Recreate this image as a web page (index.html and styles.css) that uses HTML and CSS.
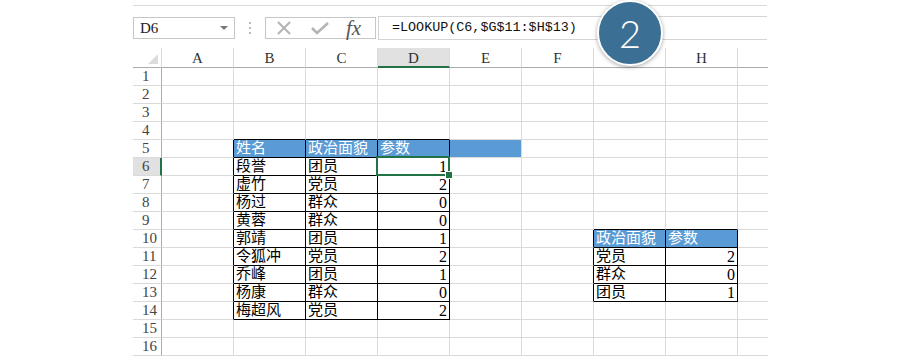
FILE: index.html
```html
<!DOCTYPE html>
<html lang="zh-CN">
<head>
  <meta charset="UTF-8">
  <title>LOOKUP</title>
  <link rel="stylesheet" href="styles.css">
</head>
<body>

<div class="sheet">
  <div class="ribbon"></div>
  <!--编辑栏-->
  <div class="fbar">
    <div class="namebox"><span>D6</span><span class="arrow"></span></div>
    <div class="grip"><i></i><i></i><i></i></div>
    <div class="fxbox">
      <svg width="16" height="16" viewBox="0 0 16 16"><path d="M2 2L14 14M14 2L2 14" stroke="#b4b4b4" stroke-width="2" fill="none"/></svg>
      <svg width="20" height="16" viewBox="0 0 20 16"><path d="M2 8L7 13L18 3" stroke="#b4b4b4" stroke-width="2.6" fill="none"/></svg>
      <span class="fx">fx</span>
    </div>
    <div class="formula">=LOOKUP(C6,$G$11:$H$13)</div>
  </div>
  <!--表格-->
  <div class="grid" id="grid"></div>
  <div class="badge">2</div>
</div>

<script>
(function () {
  var grid=document.getElementById("grid");
  //G列标题被标记遮住
  var letters=["A","B","C","D","E","F","","H",""];
  var t1=[["段誉","团员",1],["虚竹","党员",2],["杨过","群众",0],["黄蓉","群众",0],["郭靖","团员",1],
          ["令狐冲","党员",2],["乔峰","团员",1],["杨康","群众",0],["梅超风","党员",2]];
  var t2=[["党员",2],["群众",0],["团员",1]];

  function cell(cls,text) {
    var d=document.createElement("div");
    d.className="c "+cls;
    d.textContent=text;
    grid.appendChild(d);
    return d;
  }
  //表头
  cell("corner","");
  for(var i=0;i<letters.length;i++){
    cell("ch"+(i==3?" on":"")+(i==8?" end":""),letters[i]);
  }
  //行
  for(var r=1;r<=16;r++){
    cell("rh"+(r==6?" on":""),r);
    for(var c=1;c<=9;c++){
      var cls=[],text="";
      if(r>=5&&r<=14&&c>=2&&c<=4) cls.push("bk");
      if(c==1&&r>=5&&r<=14) cls.push("bkr");
      if(r==4&&c>=2&&c<=4) cls.push("bkb");
      if(r>=10&&r<=13&&c>=7&&c<=8) cls.push("bk");
      if(c==6&&r>=10&&r<=13) cls.push("bkr");
      if(r==9&&c>=7&&c<=8) cls.push("bkb");
      if((r==5&&c>=2&&c<=5)||(r==10&&c>=7&&c<=8)) cls.push("hd");
      if(c==9) cls.push("end");
      if(r==5){
        text=["","","姓名","政治面貌","参数",""][c]||"";
      }else if(r>=6&&r<=14&&c>=2&&c<=4){
        text=t1[r-6][c-2];
        if(c==4) cls.push("num");
      }else if(r==10&&c>=7&&c<=8){
        text=c==7?"政治面貌":"参数";
      }else if(r>=11&&r<=13&&c>=7&&c<=8){
        text=t2[r-11][c-7];
        if(c==8) cls.push("num");
      }
      if(r==6&&c==4) cls.push("sel");
      cell(cls.join(" "),text);
    }
  }
})();
</script>

</body>
</html>
```

FILE: styles.css
```css
*{
  margin: 0;
  padding: 0;
  box-sizing: border-box;
}
body{
  background: #fff;
  font-family: "Liberation Serif", "Noto Sans CJK SC", serif;
  color: #000;
}
.sheet{
  position: relative;
  width: 634px;
  margin-left: 133px;
}
.ribbon{
  height: 6px;
  border-bottom: 1px solid #dadada;
}
/*编辑栏*/
.fbar{
  display: flex;
  align-items: center;
  height: 24px;
  margin-top: 10px;
}
.namebox{
  display: flex;
  align-items: center;
  justify-content: space-between;
  width: 102px;
  height: 22px;
  padding: 0 6px 0 6px;
  border: 1px solid #c6c6c6;
  font-size: 15px;
  color: #222;
}
.arrow{
  width: 0;
  height: 0;
  border-left: 4px solid transparent;
  border-right: 4px solid transparent;
  border-top: 4px solid #777;
}
.grip{
  display: flex;
  flex-direction: column;
  gap: 3px;
  width: 30px;
  align-items: center;
}
.grip i{
  display: block;
  width: 2px;
  height: 2px;
  background: #bbb;
}
.fxbox{
  display: flex;
  align-items: center;
  width: 111px;
  height: 22px;
  padding-left: 10px;
  gap: 18px;
  border: 1px solid #c6c6c6;
}
.fx{
  font-family: "Liberation Serif", serif;
  font-style: italic;
  font-size: 21px;
  line-height: 20px;
  color: #555;
  margin-left: -2px;
}
.formula{
  flex: 1;
  height: 24px;
  margin-left: 2px;
  padding-left: 13px;
  border: 1px solid #d4d4d4;
  border-right: none;
  font-family: "Liberation Mono", monospace;
  font-size: 13.4px;
  line-height: 22px;
  color: #111;
}
/*表格*/
.grid{
  display: grid;
  grid-template-columns: 29px repeat(8, 72px) 30px;
  grid-template-rows: 20px repeat(16, 18px);
  margin-top: 8px;
}
.c{
  position: relative;
  border-right: 1px solid #dadada;
  border-bottom: 1px solid #dadada;
  padding: 0 2px;
  font-size: 15px;
  line-height: 17px;
  white-space: nowrap;
}
.c.end{
  border-right: none;
}
.corner{
  border-bottom-color: #ababab;
}
.corner::after{
  content: "";
  position: absolute;
  right: 3px;
  bottom: 3px;
  width: 0;
  height: 0;
  border-left: 10px solid transparent;
  border-bottom: 10px solid #dcdcdc;
}
.ch{
  border-bottom-color: #ababab;
  text-align: center;
  font-size: 15px;
  line-height: 20px;
  color: #333;
}
.ch.on{
  background: #e1e1e1;
  border-bottom: 2px solid #217346;
}
.rh{
  border-right-color: #ababab;
  padding-left: 9px;
  font-size: 15px;
  color: #444;
}
.rh.on{
  background: #e1e1e1;
  border-right: 2px solid #217346;
}
.bk{
  border-right-color: #000;
  border-bottom-color: #000;
}
.bkr{
  border-right-color: #000;
}
.bkb{
  border-bottom-color: #000;
}
.hd{
  background: #5b9bd5;
  color: #fff;
}
.num{
  text-align: right;
  font-size: 16px;
}
.sel::after{
  content: "";
  position: absolute;
  left: -2px;
  top: -2px;
  right: -1px;
  bottom: -1px;
  border: 2px solid #217346;
}
.sel::before{
  content: "";
  position: absolute;
  right: -4px;
  bottom: -4px;
  width: 6px;
  height: 6px;
  background: #217346;
  border: 1px solid #fff;
  z-index: 2;
}
/*步骤标记*/
.badge{
  position: absolute;
  left: 464px;
  top: 0;
  width: 66px;
  height: 66px;
  border: 2px solid #fff;
  border-radius: 50%;
  background: #3c6f94;
  box-shadow: 0 1px 4px rgba(0,0,0,.35);
  color: #fff;
  font-family: Lato, "Open Sans", sans-serif;
  font-weight: 300;
  font-size: 38px;
  line-height: 62px;
  text-align: center;
}
```
